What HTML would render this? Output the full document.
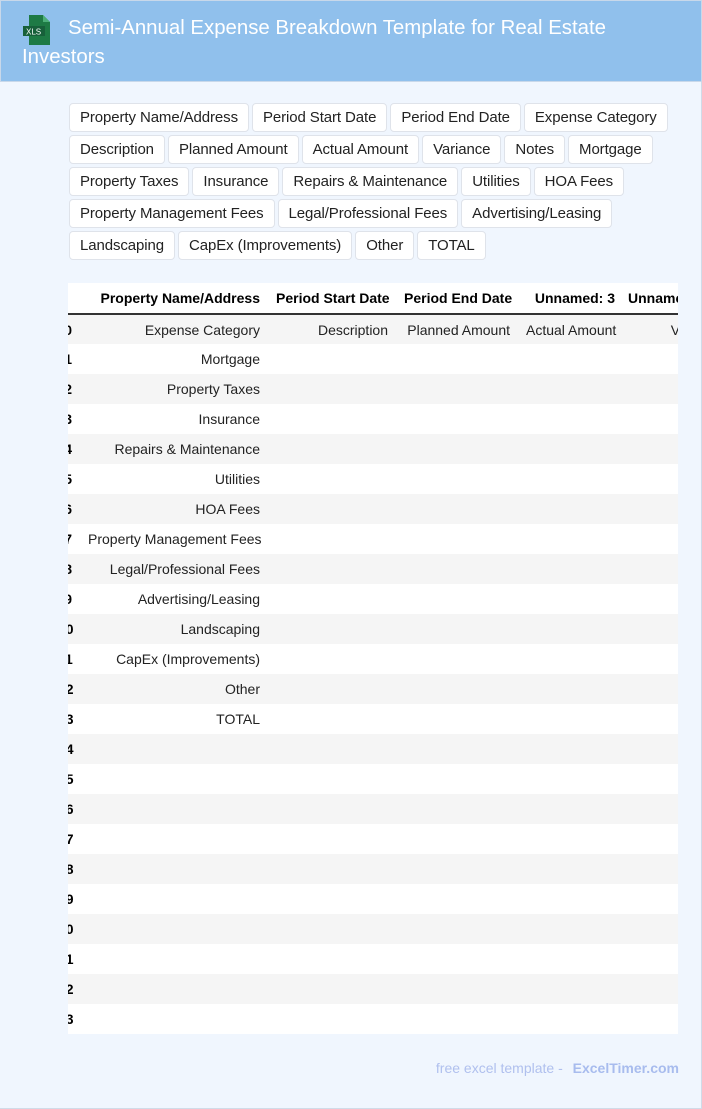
<!DOCTYPE html>
<html><head><meta charset="utf-8"><style>
*{box-sizing:border-box;margin:0;padding:0}
body{width:702px;height:1109px;background:#f0f6fe;font-family:"Liberation Sans",sans-serif;position:relative;overflow:hidden;border-right:1px solid #d0dbe8;border-bottom:1px solid #d0dbe8}
.hdr{position:absolute;left:0;top:0;width:702px;height:82px;background:#90c0ec;border:1px solid #c8d8ea}
.hdr h1{position:absolute;left:21px;top:13px;width:650px;font-weight:normal;color:#fff;font-size:20.4px;line-height:29px;text-indent:46px}
.ico{position:absolute;left:22px;top:14px}
.chips{position:absolute;left:69px;top:103px;width:610px;display:flex;flex-wrap:wrap;gap:3px 3px}
.chip{height:29px;line-height:27px;padding:0 10px;background:#fff;border:1px solid #dfe3ea;border-radius:4px;font-size:15px;color:#222;letter-spacing:-0.1px}
.wrap{position:absolute;left:68px;top:283px;width:610px;height:751px;overflow:hidden;background:#fff}
table{position:absolute;left:-18px;top:0;border-collapse:collapse;font-size:14px;color:#222;table-layout:fixed;width:760px}
td,th{height:30px;padding:0 8px;text-align:right;white-space:nowrap;overflow:hidden}
th{font-weight:bold;color:#000;border-bottom:2px solid #333;height:31px}
tbody tr:nth-child(odd) td{background:#f5f5f5}
td:first-child{font-weight:bold;color:#000}
.ft{position:absolute;right:22px;top:1060px;font-size:14px;color:#b0c0ee}
.ft b{color:#a8bcee;margin-left:6px}
</style></head><body>
<div class="hdr"><svg class="ico" width="28" height="30" viewBox="0 0 28 30"><path d="M6 0h14l7 7v23H6z" fill="#1e7a45"/><path d="M20 0v7h7z" fill="#4caf78"/><rect x="0" y="11" width="22" height="10" fill="#17603a"/><text x="3" y="19.5" font-size="8" fill="#fff" font-family="Liberation Sans">XLS</text></svg><h1>Semi-Annual Expense Breakdown Template for Real Estate Investors</h1></div>
<div class="chips">
<span class="chip">Property Name/Address</span><span class="chip">Period Start Date</span><span class="chip">Period End Date</span><span class="chip">Expense Category</span>
<span class="chip">Description</span><span class="chip">Planned Amount</span><span class="chip">Actual Amount</span><span class="chip">Variance</span><span class="chip">Notes</span><span class="chip">Mortgage</span>
<span class="chip">Property Taxes</span><span class="chip">Insurance</span><span class="chip">Repairs &amp; Maintenance</span><span class="chip">Utilities</span><span class="chip">HOA Fees</span>
<span class="chip">Property Management Fees</span><span class="chip">Legal/Professional Fees</span><span class="chip">Advertising/Leasing</span>
<span class="chip">Landscaping</span><span class="chip">CapEx (Improvements)</span><span class="chip">Other</span><span class="chip">TOTAL</span>
</div>
<div class="wrap"><table>
<colgroup><col style="width:30px"><col style="width:188px"><col style="width:128px"><col style="width:122px"><col style="width:105px"><col style="width:110px"><col style="width:77px"></colgroup>
<thead><tr><th></th><th>Property Name/Address</th><th>Period Start Date</th><th>Period End Date</th><th>Unnamed: 3</th><th style="text-align:left;padding-left:5px">Unnamed: 4</th><th></th></tr></thead>
<tbody>
<tr><td>0</td><td>Expense Category</td><td>Description</td><td>Planned Amount</td><td>Actual Amount</td><td>Variance</td><td></td></tr>
<tr><td>1</td><td>Mortgage</td><td></td><td></td><td></td><td></td><td></td></tr>
<tr><td>2</td><td>Property Taxes</td><td></td><td></td><td></td><td></td><td></td></tr>
<tr><td>3</td><td>Insurance</td><td></td><td></td><td></td><td></td><td></td></tr>
<tr><td>4</td><td>Repairs &amp; Maintenance</td><td></td><td></td><td></td><td></td><td></td></tr>
<tr><td>5</td><td>Utilities</td><td></td><td></td><td></td><td></td><td></td></tr>
<tr><td>6</td><td>HOA Fees</td><td></td><td></td><td></td><td></td><td></td></tr>
<tr><td>7</td><td>Property Management Fees</td><td></td><td></td><td></td><td></td><td></td></tr>
<tr><td>8</td><td>Legal/Professional Fees</td><td></td><td></td><td></td><td></td><td></td></tr>
<tr><td>9</td><td>Advertising/Leasing</td><td></td><td></td><td></td><td></td><td></td></tr>
<tr><td>10</td><td>Landscaping</td><td></td><td></td><td></td><td></td><td></td></tr>
<tr><td>11</td><td>CapEx (Improvements)</td><td></td><td></td><td></td><td></td><td></td></tr>
<tr><td>12</td><td>Other</td><td></td><td></td><td></td><td></td><td></td></tr>
<tr><td>13</td><td>TOTAL</td><td></td><td></td><td></td><td></td><td></td></tr>
<tr><td>14</td><td></td><td></td><td></td><td></td><td></td><td></td></tr>
<tr><td>15</td><td></td><td></td><td></td><td></td><td></td><td></td></tr>
<tr><td>16</td><td></td><td></td><td></td><td></td><td></td><td></td></tr>
<tr><td>17</td><td></td><td></td><td></td><td></td><td></td><td></td></tr>
<tr><td>18</td><td></td><td></td><td></td><td></td><td></td><td></td></tr>
<tr><td>19</td><td></td><td></td><td></td><td></td><td></td><td></td></tr>
<tr><td>20</td><td></td><td></td><td></td><td></td><td></td><td></td></tr>
<tr><td>21</td><td></td><td></td><td></td><td></td><td></td><td></td></tr>
<tr><td>22</td><td></td><td></td><td></td><td></td><td></td><td></td></tr>
<tr><td>23</td><td></td><td></td><td></td><td></td><td></td><td></td></tr>
</tbody>
</table></div>
<div class="ft">free excel template - <b>ExcelTimer.com</b></div>
</body></html>
